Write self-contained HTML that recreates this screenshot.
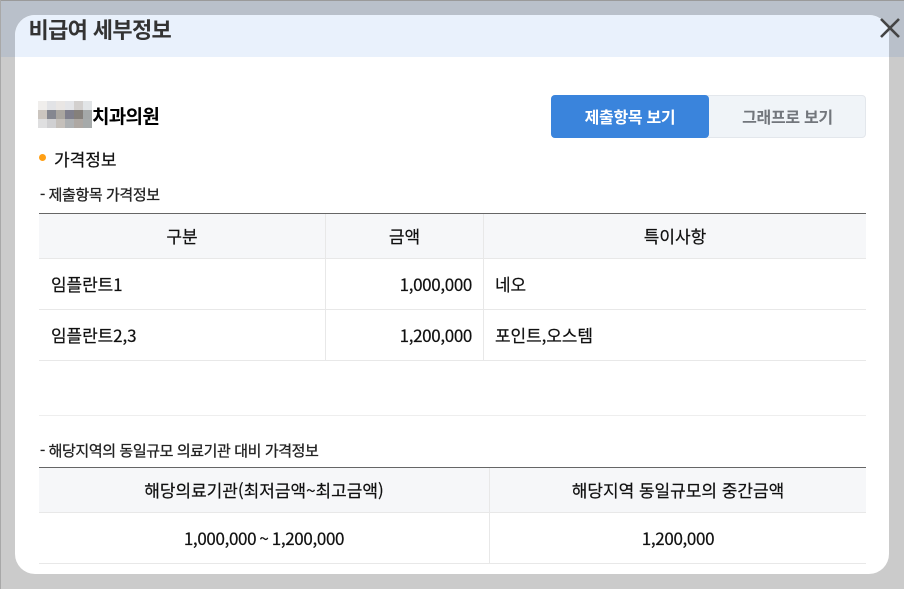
<!DOCTYPE html>
<html lang="ko"><head><meta charset="utf-8"><style>
*{box-sizing:border-box;margin:0;padding:0}
html,body{width:904px;height:589px;overflow:hidden;background:#cbcbcb}
body{position:relative;font-family:"Noto Sans CJK KR",sans-serif;color:#111;-webkit-text-stroke:.2px currentColor}
.a{position:absolute;white-space:nowrap}
.line{position:absolute;left:39px;width:827px;height:1px;background:#e8e8e8}
.c{text-align:center}
.t{font-size:17px;letter-spacing:-.1px;line-height:24px}
.h{font-size:17px;letter-spacing:-.02px;line-height:24px}
.n{font-size:17px;letter-spacing:-.35px;line-height:24px}
.s{font-size:15px;line-height:21px;letter-spacing:-.4px;color:#222;-webkit-text-stroke:.3px #222}
</style></head><body>
<div class="a" style="left:0;top:0;width:904px;height:57px;background:#b9c0ca"></div>
<div class="a" style="left:0;top:0;width:904px;height:1px;background:#9a9a9a"></div>
<div class="a" style="left:0;top:0;width:1px;height:589px;background:#a8a8a8"></div>
<div class="a" style="left:15px;top:15px;width:874px;height:559px;background:#fff;border-radius:20px;overflow:hidden">
<div style="height:42px;background:#e9f1fc"></div></div>
<div class="a" style="left:28.5px;top:13px;font-size:22px;line-height:32px;font-weight:700;letter-spacing:-.65px;color:#333;-webkit-text-stroke:0">비급여 세부정보</div>
<svg class="a" style="left:878px;top:16px" width="24" height="24" viewBox="0 0 24 24"><path d="M3 3L21 21M21 3L3 21" stroke="#444" stroke-width="2.6" fill="none"/></svg>

<div class="a" style="left:38px;top:101px;display:grid;grid-template-columns:repeat(6,9px);grid-auto-rows:9px">
<i style="background:#f0eeec"></i><i style="background:#e2e3e6"></i><i style="background:#e9e6e4"></i><i style="background:#e4e5e8"></i><i style="background:#d3d0ce"></i><i style="background:#e2e5e7"></i>
<i style="background:#cbc5bf"></i><i style="background:#858790"></i><i style="background:#aaa6a0"></i><i style="background:#7f7f8c"></i><i style="background:#85807b"></i><i style="background:#a4a8a8"></i>
<i style="background:#dfdfe0"></i><i style="background:#d0d0d2"></i><i style="background:#c5c0bb"></i><i style="background:#aeb1b3"></i><i style="background:#aea8a3"></i><i style="background:#a6aaaa"></i>
</div>
<div class="a" style="left:92px;top:102px;font-size:19px;line-height:27px;font-weight:700;letter-spacing:-.7px;color:#000;-webkit-text-stroke:0">치과의원</div>

<div class="a" style="left:551px;top:95px;width:315px;height:43px;background:#f0f4f8;border:1px solid #e3e7ec;border-radius:4px"></div>
<div class="a c" style="left:551px;top:95px;width:158px;height:43px;background:#3a84dc;border-radius:4px;color:#fff;font-size:16px;font-weight:700;line-height:43px;letter-spacing:-.3px;-webkit-text-stroke:0">제출항목 보기</div>
<div class="a c" style="left:709px;top:95px;width:157px;height:43px;color:#72767c;font-size:16px;font-weight:700;line-height:43px;letter-spacing:-.3px;-webkit-text-stroke:0">그래프로 보기</div>

<div class="a" style="left:39px;top:154px;width:7px;height:7px;border-radius:50%;background:#ff9f14"></div>
<div class="a" style="left:54px;top:147px;font-size:17px;line-height:24px;letter-spacing:0">가격정보</div>
<div class="a s" style="left:40px;top:184px">- 제출항목 가격정보</div>

<div class="a" style="left:39px;top:213px;width:827px;height:46px;background:#f6f7f9"></div>
<div class="line" style="top:213px;background:#666"></div>
<div class="line" style="top:258px"></div>
<div class="line" style="top:309px"></div>
<div class="line" style="top:360px"></div>
<div class="line" style="top:415px;background:#eee"></div>
<div class="a" style="left:325px;top:214px;width:1px;height:147px;background:#e8e8e8"></div>
<div class="a" style="left:483px;top:214px;width:1px;height:147px;background:#e8e8e8"></div>
<div class="a c h" style="left:39px;top:224px;width:286px">구분</div>
<div class="a c h" style="left:326px;top:224px;width:157px">금액</div>
<div class="a c h" style="left:484px;top:224px;width:382px">특이사항</div>
<div class="a t" style="left:51px;top:272px">임플란트1</div>
<div class="a n" style="left:326px;top:272px;width:146px;text-align:right">1,000,000</div>
<div class="a t" style="left:495px;top:272px">네오</div>
<div class="a t" style="left:51px;top:323px">임플란트2,3</div>
<div class="a n" style="left:326px;top:323px;width:146px;text-align:right">1,200,000</div>
<div class="a t" style="left:495px;top:323px">포인트,오스템</div>

<div class="a s" style="left:40px;top:440px">- 해당지역의 동일규모 의료기관 대비 가격정보</div>
<div class="a" style="left:39px;top:467px;width:827px;height:46px;background:#f6f7f9"></div>
<div class="line" style="top:467px;background:#666"></div>
<div class="line" style="top:512px"></div>
<div class="line" style="top:563px"></div>
<div class="a" style="left:489px;top:468px;width:1px;height:96px;background:#e8e8e8"></div>
<div class="a c h" style="left:39px;top:478px;width:450px">해당의료기관(최저금액~최고금액)</div>
<div class="a c h" style="left:490px;top:478px;width:376px">해당지역 동일규모의 중간금액</div>
<div class="a c n" style="left:39px;top:526px;width:450px;word-spacing:-1.2px">1,000,000 ~ 1,200,000</div>
<div class="a c n" style="left:490px;top:526px;width:376px">1,200,000</div>
</body></html>
